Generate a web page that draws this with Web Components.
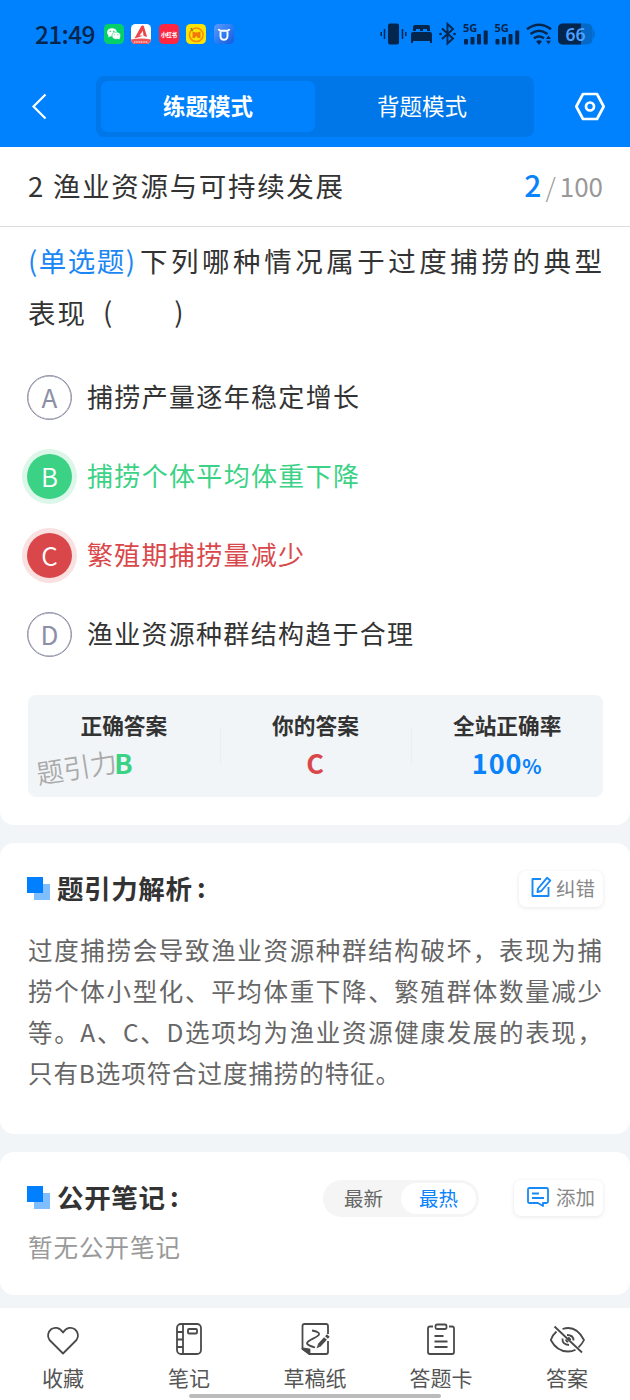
<!DOCTYPE html>
<html lang="zh-CN">
<head>
<meta charset="utf-8">
<title>练题模式</title>
<style>
html,body{margin:0;padding:0}
body{width:630px;height:1400px;overflow:hidden;background:#f1f5f8;color:#333;font-family:"Noto Sans","Noto Sans CJK SC",sans-serif}
</style>
</head>
<body>
<quiz-app></quiz-app>
<script>
const CJK='"Noto Sans CJK SC",sans-serif';
function define(name,css,html){
  customElements.define(name,class extends HTMLElement{
    constructor(){
      super();
      const attr=k=>this.getAttribute(k)||'';
      this.attachShadow({mode:'open'}).innerHTML='<style>*{box-sizing:border-box}svg{display:block;overflow:visible}'+css+'</style>'+(typeof html==='function'?html(attr):html);
    }
  });
}

/* One line of text: w = drawn width, glyphs spread evenly across it */
define('text-line',
 ':host{display:block;white-space:nowrap;margin:-1px 0 1px}div{text-align:justify;text-align-last:justify}',
 a=>`<div style="width:${a('w')}px"><slot></slot></div>`);

define('status-bar',
 `:host{display:flex;height:68px;padding:0 34px 0 35px;align-items:center;justify-content:space-between;color:#04254c}
 .l,.r{display:flex;align-items:center}
 .time{font:500 24.500px/30px ${CJK};width:69px;white-space:nowrap;letter-spacing:-.7px}
 .apps{display:flex;gap:7.4px}`,
 `<div class="l"><div class="time">21:49</div><div class="apps">
 <svg width="20" height="20" viewBox="0 0 20 20"><rect width="20" height="20" rx="4.5" fill="#05cf69"/><ellipse cx="8" cy="8.4" rx="5" ry="4.2" fill="#fff"/><path d="M4.6 11l-.4 2.4 2.5-1.3z" fill="#fff"/><ellipse cx="12.3" cy="11.7" rx="4.3" ry="3.6" fill="#fff" stroke="#05cf69" stroke-width=".6"/><path d="M13.8 14.6l1.9 1-.3-2z" fill="#fff"/><circle cx="6.2" cy="7.3" r=".7" fill="#05cf69"/><circle cx="9.8" cy="7.3" r=".7" fill="#05cf69"/><circle cx="10.9" cy="10.8" r=".5" fill="#05cf69"/><circle cx="13.8" cy="10.8" r=".5" fill="#05cf69"/></svg>
 <svg width="20" height="20" viewBox="0 0 20 20"><defs><clipPath id="c"><rect width="20" height="20" rx="4.5"/></clipPath></defs><g clip-path="url(#c)"><path fill="#fff" d="M0 0h20v20H0z"/><path d="M3.500 14.500L10 2.500c1-1.600 2.700-1.300 3.100.4l3 10.200-3.600-1.400-.6-5-3.400 4.800 3.200.2C9.500 13 6 13.500 3.500 14.500z" fill="#ed444b"/><path d="M0 15.500q10-2 20 0V20H0z" fill="#ef5257"/><path d="M3 18h14" stroke="#fff" stroke-width="1" stroke-dasharray="1.200 .500"/></g></svg>
 <svg width="20" height="20" viewBox="0 0 20 20"><rect width="20" height="20" rx="4.500" fill="#fe2641"/><text x="10" y="12.500" text-anchor="middle" font-size="5.600" font-weight="900" fill="#fff" font-family='"Noto Sans CJK SC"' textLength="16">小红书</text></svg>
 <svg width="20" height="20" viewBox="0 0 20 20"><rect width="20" height="20" rx="4.500" fill="#fbe305"/><circle cx="10.300" cy="10.800" r="6.800" fill="none" stroke="#f68b09" stroke-width="1.500"/><path d="M6.500 7.500l3 1h2l3-1v6.500h-2.600l-1.600-2-1.600 2H6.500z" fill="#f37807"/><path d="M5 4l1.500 3" stroke="#668b35" stroke-width="1.400"/></svg>
 <svg width="20" height="20" viewBox="0 0 20 20"><defs><linearGradient id="b" x2="1" y2="1"><stop stop-color="#629cf9"/><stop offset=".5" stop-color="#2d7cf5"/><stop offset="1" stop-color="#1758df"/></linearGradient></defs><rect width="20" height="20" rx="4.500" fill="url(#b)"/><path d="M4.500 5q.5 1.800 2.500 1.800h6q2 0 2.500-1.800M6.500 6.500v5.500c0 5 7 5 7 0V6.500" fill="none" stroke="#fff" stroke-width="1.900"/></svg>
 </div></div>
 <div class="r"><svg width="216" height="24" viewBox="0 0 216 24" fill="#04254c">
 <rect x="8" y="1.500" width="11" height="21" rx="2"/><path d="M1.200 10v4M4.500 7v10M22.500 7v10M25.800 10v4" stroke="#04254c" stroke-width="1.500"/>
 <path d="M33 9V5q0-2 2-2h13q2 0 2 2v4h-3V7h-4v2h-3V7h-4v2zM31 12q0-2 2-2h17q2 0 2 2v9h-2v-2H33v2h-2z"/>
 <path d="M62 6.500l11 10-5.500 5V2l5.500 5-11 10" fill="none" stroke="#04254c" stroke-width="1.900"/><circle cx="60.500" cy="12" r="1.300"/><circle cx="74.500" cy="12" r="1.300"/>
 <g><text x="83" y="9.500" font-size="11" font-weight="700" font-family='"Noto Sans"'>5G</text><rect x="84" y="17" width="4" height="5.500" rx="1"/><rect x="90.500" y="15" width="4" height="7.500" rx="1"/><rect x="97" y="12" width="4" height="10.500" rx="1"/><rect x="103.700" y="8.500" width="4" height="14" rx="1"/></g>
 <g transform="translate(31.500 0)"><text x="83" y="9.500" font-size="11" font-weight="700" font-family='"Noto Sans"'>5G</text><rect x="84" y="17" width="4" height="5.500" rx="1"/><rect x="90.500" y="15" width="4" height="7.500" rx="1"/><rect x="97" y="12" width="4" height="10.500" rx="1"/><rect x="103.700" y="8.500" width="4" height="14" rx="1"/></g>
 <path d="M147 7.200q12-9 24 0M150.500 12q8.500-6.500 17 0M154 16.300q5-3.500 10 0" fill="none" stroke="#04254c" stroke-width="2.500"/><path d="M156 19.300q3-2 6 0l-3 3.700zM166 17l2.500-3.500L171 17zM166 18.800l2.500 3.500 2.500-3.500z"/>
 <rect x="178" y="1.500" width="34.500" height="21" rx="5" fill="#0569c8"/><path d="M213.500 8q1.500 4 0 8z" fill="#0569c8" stroke="#0569c8"/><path d="M201 1.500V22.500H183q-5 0-5-5V6.500q0-5 5-5z" fill="#04254c"/><text x="195.500" y="18.500" font-size="17.500" font-weight="600" text-anchor="middle" fill="#4ba0ff" font-family='"Noto Sans"'>66</text>
 </svg></div>`);

define('mode-nav',
 `:host{display:grid;grid-template-columns:96px 438px 96px;height:79px;padding-top:8px}
 .tabs{height:61px;border-radius:8px;background:#0077e8;padding:5px;display:flex;font:400 22.500px/49px ${CJK};color:#fff}
 .tabs div{flex:1;height:51px;text-align:center;border-radius:7px}.tabs .on{background:#0082ff;font-weight:700}
 .b{padding:17px 0 0 32px}.s{padding:16px 0 0 41px}`,
 `<div class="b"><svg width="15" height="27" viewBox="0 0 15 27"><path d="M13.500 1.500L1.500 13.500l12 12" fill="none" stroke="#fff" stroke-width="2.200"/></svg></div>
 <div class="tabs"><div class="on">练题模式</div><div>背题模式</div></div>
 <div class="s"><svg width="30" height="29" viewBox="0 0 30 29" fill="none" stroke="#fff" stroke-width="2.700" stroke-linejoin="round"><path d="M8 2h14l6.700 12.500L22 27H8L1.300 14.500z"/><circle cx="15" cy="14.500" r="4"/></svg></div>`);

define('quiz-title',
 `:host{display:flex;height:80px;background:#fff;border-bottom:1px solid #ddd;padding:0 27px 0 28px;align-items:center;justify-content:space-between;font:400 27.500px/40px ${CJK}}
 .n{display:flex;align-items:baseline;color:#999;font-size:26px;margin-top:-3px}.n b{font-size:30px;font-weight:500;color:#0a82fa}.n i{font-style:normal;font-weight:300;margin:0 4px 0 4px}
 .t{display:flex;margin-top:-2px}.t span{width:25px;margin-top:-1px}`,
 `<div class="t"><span>2</span><text-line w="290">渔业资源与可持续发展</text-line></div><div class="n"><b>2</b><i>/</i>100</div>`);

define('quiz-question',
 `:host{display:block;padding:8px 28px 0;height:126px;font:400 27.500px/52px ${CJK}}
 .a{display:flex}.k{color:#1a87f5}.p{margin-left:5px}.c{display:flex}.c span{margin-top:-2px}.c span:last-child{margin-left:62px}`,
 `<div class="a"><text-line w="107" class="k">(单选题)</text-line><text-line w="462" class="p">下列哪种情况属于过度捕捞的典型</text-line></div>
 <div class="c"><text-line w="57">表现</text-line><span style="margin-left:18px">(</span><span>)</span></div>`);

define('quiz-option',
 `:host{display:flex;height:79px;align-items:center;padding-left:27px;font:400 26px/40px ${CJK}}
 text-line{margin:-2px 0 1px}
 .o{width:45px;height:45px;border-radius:50%;border:1px solid #8c8fa5;color:#8c8fa5;font:400 26px/42px ${CJK};text-align:center;margin-right:15px}
 .o{box-shadow:inset 0 0 0 .4px #8c8fa5}
 :host([state=ok]){color:#3bd286}:host([state=bad]){color:#d9474a}
 :host([state]) .o{color:#fff;border:0;line-height:44px;font-weight:350}
 :host([state=ok]) .o{background:#3bd286;box-shadow:0 0 0 5px #dcf7e9}
 :host([state=bad]) .o{background:#d9474a;box-shadow:0 0 0 5px #f9e0e1}`,
 a=>`<div class="o">${a('k')}</div><text-line w="${a('w')}"><slot></slot></text-line>`);

define('answer-stats',
 `:host{display:grid;grid-template-columns:repeat(3,1fr);position:relative;margin:21px 27px 0 28px;height:102px;border-radius:8px;background:#f1f5f8;text-align:center;padding-top:11px}
 .h{font:700 21.700px/38px ${CJK}}.v{font:700 27px/37px ${CJK};letter-spacing:.9px}.v small{font-size:20px}
 .c+.c{background:linear-gradient(#e9eef2,#e9eef2) 0 22px/1px 36px no-repeat}
 .w{position:absolute;left:8px;top:52px;font:350 27px/40px ${CJK};color:#aaa;transform:rotate(-9deg)}`,
 `<div class="c"><div class="h">正确答案</div><div class="v" style="color:#3bd286">B</div></div><div class="c"><div class="h">你的答案</div><div class="v" style="color:#d9474a">C</div></div><div class="c"><div class="h">全站正确率</div><div class="v" style="color:#0a82fa">100<small>%</small></div></div><div class="w">题引力</div>`);

define('section-head',
 `:host{display:flex;align-items:center;height:38px;padding:0 27px}
 svg{margin:-2px 7px 0 0}.t{font:700 26.500px/38px ${CJK};flex:1;display:flex}.t span{margin:-2px 0 0 5px}`,
 `<svg width="23" height="23" viewBox="0 0 23 23"><path d="M7 7h16v16H7z" fill="#80bfff"/><path d="M0 0h16v16H0z" fill="#0080ff"/></svg><div class="t"><slot></slot><span>:</span></div><slot name="act"></slot>`);

define('action-button',
 `:host{display:flex;align-items:center;justify-content:space-between;height:36px;background:#fff;border-radius:7px;box-shadow:0 1px 5px #00000018;padding:0 8px 0 11px;font:400 19.500px/34px ${CJK};color:#888}span{margin-top:-2px}svg{margin-top:-3px}`,
 a=>(a('icon')==='edit'
 ?'<svg width="22" height="21" viewBox="0 0 22 21" fill="none" stroke="#188af7" stroke-width="1.900" stroke-linejoin="round"><path d="M11 2H2.500v17h16v-9"/><path d="M8 11.500L17 .800l3.300 2.700-9 10.500-3.800 1z"/></svg>'
 :'<svg width="22" height="20" viewBox="0 0 22 20" fill="none" stroke="#188af7" stroke-width="1.800" stroke-linejoin="round" style="margin-left:2px"><path d="M2.500 1h17q1.500 0 1.500 1.500v12q0 1.500-1.500 1.500H16v3l-5-3H2.500Q1 16 1 14.500v-12Q1 1 2.500 1zM5 6.500h7M5 11h12"/></svg>')+'<span><slot></slot></span>');

define('sort-switch',
 `:host{display:flex;width:156px;height:37px;border-radius:19px;background:#f5f5f5;padding:3px;font:400 19.500px/29px ${CJK};color:#666;margin-right:35px}
 div{flex:1;height:31px;text-align:center}.on{background:#fff;border-radius:16px;color:#0a82fa}`,
 `<div>最新</div><div class="on">最热</div>`);

define('tool-item',
 `:host{display:flex;flex-direction:column;align-items:center;width:126px;font:400 21px/30px ${CJK};color:#555}
 .i{height:42px;margin-top:14px}svg{fill:none;stroke:#4a4a4a;stroke-width:1.800;stroke-linejoin:round}`,
 a=>`<div class="i"><svg width="36" height="36" viewBox="0 0 36 36">${({
 heart:'<path d="M18 31.500L4.500 18C-1 10.500 10-.500 18 10.500 26-.500 37 10.500 31.500 18z"/>',
 book:'<rect x="6" y="2" width="24" height="30" rx="4"/><path d="M12 2v30M6 10h6M6 17.500h6M6 25h6"/><rect x="17" y="7" width="9" height="4.500" rx="1"/>',
 draft:'<path d="M31 12V4Q31 2 29 2H7.500Q5.500 2 5.500 4V27l7 5H29q2 0 2-2V19M15 8.500Q23 10 22 12.500C21 15.500 9 18.500 10 21.500q1 2 8 4"/><path d="M5.500 26.500l7 5.500v-4.500z" fill="#4a4a4a"/><path d="M22 23.500l6.500-7M29.500 15.500l1.800-2" stroke-width="3.800"/><path d="M19.500 26.500l1.500-4 2.300 2z" fill="#4a4a4a" stroke="none"/>',
 card:'<path d="M10 4.500H7Q5 4.500 5 6.500v23.500Q5 32 7 32h22q2 0 2-2V6.500q0-2-2-2h-3"/><rect x="12.500" y="2.500" width="11" height="4.500" rx="1.500"/><path d="M11.500 14h9M11.500 19.500h13M11.500 25h13"/>',
 eye:'<path d="M7.500 9.500Q3 13.500 1.800 18q6 11.500 17.200 11.500 4 0 7.500-1.800M13.500 7Q27 2.500 35 18q-1.800 4-5.500 7.300M5.500 4.500l27.500 26M13.500 16.500q-.500 6 6.500 6.500M18 13q6.500 0 6.500 5.500"/><path d="M16.800 17.500q.4 2 2.500 2.300M19 15.800q2.200.3 2.300 2.300"/>'})[a('icon')]}</svg></div><slot></slot>`);

define('tool-bar',
 `:host{display:grid;grid-template-rows:84px 8px;height:92px;background:#fff}
 .row{display:flex}.home{width:252px;height:4px;margin:2px auto 0;border-radius:2px;background:#bbb;position:relative}`,
 `<div class="row"><tool-item icon="heart">收藏</tool-item><tool-item icon="book">笔记</tool-item><tool-item icon="draft">草稿纸</tool-item><tool-item icon="card">答题卡</tool-item><tool-item icon="eye">答案</tool-item></div><div class="home"></div>`);

define('quiz-app',
 `:host{display:flex;flex-direction:column;width:630px;height:1400px;background:#f1f5f8}
 .top{background:#0082ff;height:147px;flex:none}
 .card{background:#fff;border-radius:14px;flex:none}
 .first{height:678px;border-radius:0 0 14px 14px;margin-bottom:18px}
 .second{height:291px;padding-top:27px;margin-bottom:18px}.third{height:143px;padding-top:27px;margin-bottom:13px}
 .body{padding:22px 28px 0;font:400 24.500px/41px ${CJK};color:#666}
 .none{padding:12px 28px 0;font:400 24.500px/38px ${CJK};color:#999}`,
 `<div class="top"><status-bar></status-bar><mode-nav></mode-nav></div>
 <div class="card first"><quiz-title></quiz-title><quiz-question></quiz-question>
 <quiz-option k="A" w="272" style="margin-top:5px">捕捞产量逐年稳定增长</quiz-option><quiz-option k="B" w="272" state="ok">捕捞个体平均体重下降</quiz-option><quiz-option k="C" w="217" state="bad">繁殖期捕捞量减少</quiz-option><quiz-option k="D" w="326">渔业资源种群结构趋于合理</quiz-option>
 <answer-stats></answer-stats></div>
 <div class="card second"><section-head><text-line w="135">题引力解析</text-line><action-button slot="act" icon="edit" style="width:84px">纠错</action-button></section-head>
 <div class="body"><text-line w="574">过度捕捞会导致渔业资源种群结构破坏，表现为捕</text-line><text-line w="574">捞个体小型化、平均体重下降、繁殖群体数量减少</text-line><text-line w="574">等。A、C、D选项均为渔业资源健康发展的表现，</text-line><text-line w="372">只有B选项符合过度捕捞的特征。</text-line></div></div>
 <div class="card third"><section-head><text-line w="108">公开笔记</text-line><sort-switch slot="act"></sort-switch><action-button slot="act" icon="note" style="width:89px">添加</action-button></section-head><div class="none"><text-line w="152">暂无公开笔记</text-line></div></div>
 <tool-bar></tool-bar>`);
</script>
</body>
</html>
